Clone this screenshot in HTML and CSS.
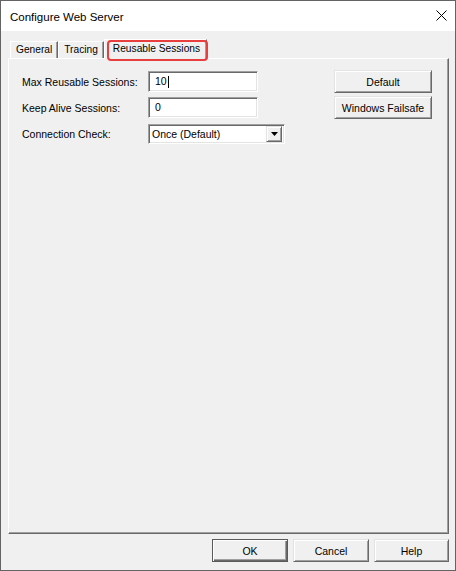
FILE: index.html
```html
<!DOCTYPE html>
<html>
<head>
<meta charset="utf-8">
<title>Configure Web Server</title>
<link rel="stylesheet" href="styles.css">
</head>
<body>
<div class="window">
  <div class="titlebar">
    <span class="title">Configure Web Server</span>
    <svg class="close" width="11" height="11" viewBox="0 0 11 11"><path d="M0.5 0.5 L10.5 10.5 M10.5 0.5 L0.5 10.5" stroke="#000" stroke-width="1" fill="none"/></svg>
  </div>
  <div class="content">
    <div class="tabs">
      <div class="tab">General</div>
      <div class="tab">Tracing</div>
      <div class="tab selected">Reusable Sessions<span class="highlight"></span></div>
    </div>
    <div class="panel">
      <div class="form">
        <label class="lbl">Max Reusable Sessions:</label>
        <div class="field">10<span class="caret"></span></div>
        <label class="lbl">Keep Alive Sessions:</label>
        <div class="field">0</div>
        <label class="lbl row3">Connection Check:</label>
        <div class="combo row3">
          <span class="combo-text">Once (Default)</span>
          <span class="combo-btn"><svg width="7" height="4" viewBox="0 0 7 4"><path d="M0 0 H7 L3.5 4 Z" fill="#000"/></svg></span>
        </div>
      </div>
      <div class="side">
        <div class="btn wide">Default</div>
        <div class="btn wide">Windows Failsafe</div>
      </div>
    </div>
    <div class="footer">
      <div class="btn foot default">OK</div>
      <div class="btn foot">Cancel</div>
      <div class="btn foot help">Help</div>
    </div>
  </div>
</div>
</body>
</html>
```
FILE: styles.css
```css
html, body {
  margin: 0;
  padding: 0;
  background: #f0f0f0;
}
.window {
  width: 456px;
  height: 571px;
  box-sizing: border-box;
  border: 1px solid #646464;
  background: #f0f0f0;
  display: flex;
  flex-direction: column;
  font-family: "Liberation Sans", Arial, sans-serif;
  font-size: 10.5px;
  color: #000;
}
.titlebar {
  height: 30px;
  flex: none;
  background: #fff;
  display: flex;
  align-items: center;
  padding: 0 8px 0 9px;
}
.title {
  font-size: 11.5px;
  flex: 1;
  padding-top: 1px;
}
.close {
  display: block;
  margin-top: -1px;
}
.content {
  flex: 1;
  display: flex;
  flex-direction: column;
  padding: 8px 6px 8px 7px;
  min-height: 0;
}
.tabs {
  height: 19px;
  flex: none;
  display: flex;
  align-items: flex-end;
  padding-left: 2px;
  font-size: 10.2px;
}
.tab {
  height: 17px;
  box-sizing: border-box;
  border-top: 1px solid #fff;
  border-left: 1px solid #fff;
  border-right: 1px solid #696969;
  box-shadow: inset -1px 0 #a0a0a0;
  padding: 0 5px;
  line-height: 16px;
  white-space: nowrap;
}
.tab.selected {
  position: relative;
  z-index: 1;
  height: 20px;
  margin-bottom: -1px;
  background: #f0f0f0;
  padding: 0 6px 0 8px;
  line-height: 17px;
}
.highlight {
  position: absolute;
  left: 2px;
  top: 0;
  width: 101px;
  height: 21px;
  box-sizing: border-box;
  border: 2px solid #e83e3e;
  border-radius: 4px;
}
.panel {
  flex: 1;
  display: flex;
  align-items: flex-start;
  border-top: 1px solid #fff;
  border-left: 1px solid #fff;
  border-right: 1px solid #696969;
  border-bottom: 1px solid #696969;
  box-shadow: inset -1px -1px #a0a0a0;
  padding: 12px 16px 0 13px;
}
.form {
  display: grid;
  grid-template-columns: 126px auto;
  grid-template-rows: 21px 21px 20px;
  row-gap: 5px;
  align-items: center;
}
.row3 {
  margin-top: 2px;
}
.lbl {
  white-space: nowrap;
}
.field {
  width: 110px;
  height: 21px;
  box-sizing: border-box;
  border: 1px solid;
  border-color: #a0a0a0 #fff #fff #a0a0a0;
  box-shadow: inset 1px 1px #696969, inset -1px -1px #e3e3e3;
  background: #fff;
  padding-left: 6px;
  line-height: 19px;
  display: flex;
  align-items: center;
}
.caret {
  display: inline-block;
  width: 1px;
  height: 12px;
  background: #000;
  margin-left: 1px;
}
.combo {
  width: 137px;
  height: 20px;
  box-sizing: border-box;
  border: 1px solid;
  border-color: #a0a0a0 #fff #fff #a0a0a0;
  box-shadow: inset 1px 1px #696969, inset -1px -1px #e3e3e3;
  background: #fff;
  display: flex;
  align-items: center;
  padding: 2px 2px 2px 3px;
}
.combo-text {
  flex: 1;
  white-space: nowrap;
}
.combo-btn {
  width: 16px;
  height: 16px;
  box-sizing: border-box;
  background: #f0f0f0;
  border: 1px solid;
  border-color: #e3e3e3 #696969 #696969 #e3e3e3;
  box-shadow: inset 1px 1px #fff, inset -1px -1px #a0a0a0;
  display: flex;
  align-items: center;
  justify-content: center;
}
.combo-btn svg {
  display: block;
}
.side {
  margin-left: auto;
  margin-top: -1px;
  display: flex;
  flex-direction: column;
  gap: 3px;
}
.btn {
  box-sizing: border-box;
  height: 23px;
  background: #f0f0f0;
  border: 1px solid;
  border-color: #e3e3e3 #696969 #696969 #e3e3e3;
  box-shadow: inset 1px 1px #fff, inset -1px -1px #a0a0a0;
  display: flex;
  align-items: center;
  justify-content: center;
  white-space: nowrap;
}
.btn.wide {
  width: 98px;
}
.footer {
  flex: none;
  display: flex;
  justify-content: flex-end;
  gap: 5px;
  margin-top: 5px;
}
.btn.foot {
  width: 76px;
}
.btn.foot.help {
  width: 75px;
}
.btn.default {
  border-color: #5a5a5a;
  box-shadow: inset 1px 1px #fff, inset -1px -1px #696969, inset -2px -2px #a0a0a0;
}
```
